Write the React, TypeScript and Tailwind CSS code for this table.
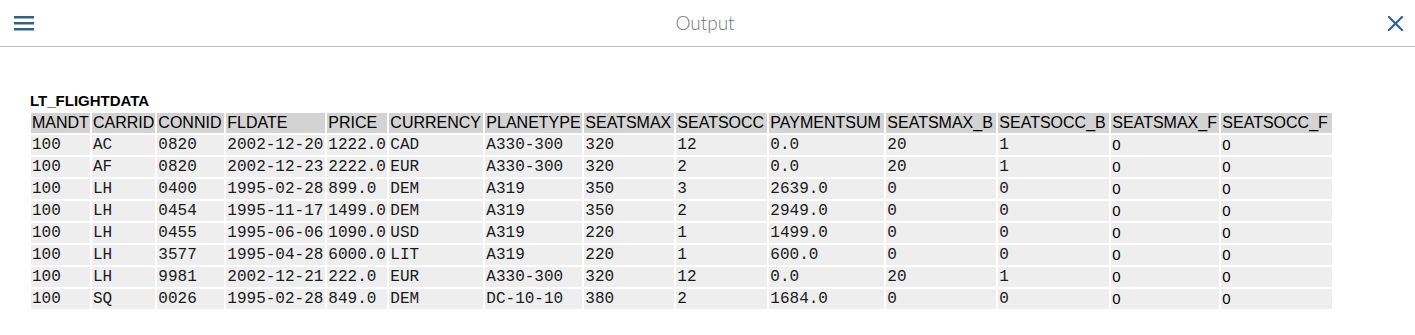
const COLUMNS = [
  { name: "MANDT", width: "w-[59px]" },
  { name: "CARRID", width: "w-[63px]" },
  { name: "CONNID", width: "w-[67px]" },
  { name: "FLDATE", width: "w-[99px]" },
  { name: "PRICE", width: "w-[60px]" },
  { name: "CURRENCY", width: "w-[94px]" },
  { name: "PLANETYPE", width: "w-[97px]" },
  { name: "SEATSMAX", width: "w-[90px]" },
  { name: "SEATSOCC", width: "w-[91px]" },
  { name: "PAYMENTSUM", width: "w-[115px]" },
  { name: "SEATSMAX_B", width: "w-[110px]" },
  { name: "SEATSOCC_B", width: "w-[111px]" },
  { name: "SEATSMAX_F", width: "w-[108px]" },
  { name: "SEATSOCC_F", width: "w-[111px]" },
] as const

const SANS_COLUMNS = new Set([12, 13])

const ROWS: readonly (readonly string[])[] = [
  ["100", "AC", "0820", "2002-12-20", "1222.0", "CAD", "A330-300", "320", "12", "0.0", "20", "1", "0", "0"],
  ["100", "AF", "0820", "2002-12-23", "2222.0", "EUR", "A330-300", "320", "2", "0.0", "20", "1", "0", "0"],
  ["100", "LH", "0400", "1995-02-28", "899.0", "DEM", "A319", "350", "3", "2639.0", "0", "0", "0", "0"],
  ["100", "LH", "0454", "1995-11-17", "1499.0", "DEM", "A319", "350", "2", "2949.0", "0", "0", "0", "0"],
  ["100", "LH", "0455", "1995-06-06", "1090.0", "USD", "A319", "220", "1", "1499.0", "0", "0", "0", "0"],
  ["100", "LH", "3577", "1995-04-28", "6000.0", "LIT", "A319", "220", "1", "600.0", "0", "0", "0", "0"],
  ["100", "LH", "9981", "2002-12-21", "222.0", "EUR", "A330-300", "320", "12", "0.0", "20", "1", "0", "0"],
  ["100", "SQ", "0026", "1995-02-28", "849.0", "DEM", "DC-10-10", "380", "2", "1684.0", "0", "0", "0", "0"],
]

function MenuIcon() {
  return (
    <svg width="20" height="16" viewBox="0 0 20 16" aria-hidden>
      <rect x="0" y="1" width="20" height="2.5" fill="#346187" />
      <rect x="0" y="7" width="20" height="2.5" fill="#346187" />
      <rect x="0" y="13" width="20" height="2.5" fill="#346187" />
    </svg>
  )
}

function CloseIcon() {
  return (
    <svg width="15" height="15" viewBox="0 0 15 15" aria-hidden>
      <path d="M1 1 L14 14 M14 1 L1 14" stroke="#2f6496" strokeWidth="2.2" strokeLinecap="square" />
    </svg>
  )
}

export default function App() {
  return (
    <div className="h-[335px] w-[1415px] overflow-hidden bg-white">
      <header className="grid h-[47px] grid-cols-[1fr_auto_1fr] items-center border-b border-[#bfbfc6] pr-[12px] pl-[14px]">
        <button type="button" aria-label="Menu" className="flex h-[20px] items-center justify-self-start">
          <MenuIcon />
        </button>
        <h1 className="mr-[7px] font-['Lato','Open_Sans',sans-serif] text-[19px] font-light text-[#74777a]">
          Output
        </h1>
        <button type="button" aria-label="Close" className="flex h-[20px] items-center justify-self-end">
          <CloseIcon />
        </button>
      </header>

      <main className="pt-[45px] pl-[29px]">
        <div className="pl-[1px] font-['Liberation_Sans',Arial,sans-serif] text-[15px] leading-[17px] font-bold text-black">
          LT_FLIGHTDATA
        </div>
        <table className="mt-[2px] border-separate border-spacing-[2px] text-black">
          <thead>
            <tr>
              {COLUMNS.map((col) => (
                <th
                  key={col.name}
                  className={`${col.width} bg-[#d3d3d3] p-[1px] text-left font-['Liberation_Sans',Arial,sans-serif] text-[16px] leading-[18px] font-normal whitespace-nowrap`}
                >
                  {col.name}
                </th>
              ))}
            </tr>
          </thead>
          <tbody>
            {ROWS.map((row, r) => (
              <tr key={r}>
                {row.map((value, c) => (
                  <td
                    key={c}
                    className={
                      SANS_COLUMNS.has(c)
                        ? "bg-[#eeeeee] p-[1px] font-['Liberation_Sans',Arial,sans-serif] text-[15px] leading-[18px] whitespace-nowrap"
                        : "bg-[#eeeeee] p-[1px] font-['Liberation_Mono','Courier_New',monospace] text-[16px] leading-[18px] text-[#1a1a1a] whitespace-nowrap"
                    }
                  >
                    {value}
                  </td>
                ))}
              </tr>
            ))}
          </tbody>
        </table>
      </main>
    </div>
  )
}
